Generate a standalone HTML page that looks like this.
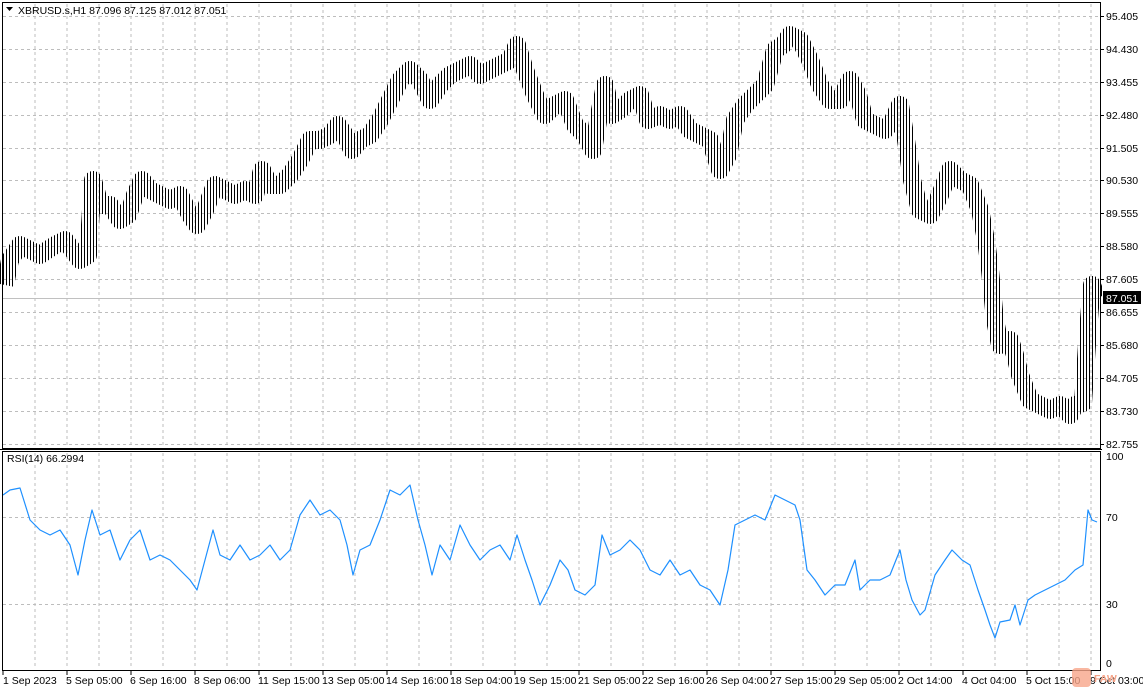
<!DOCTYPE html>
<html><head><meta charset="utf-8"><style>
body{margin:0;background:#fff;width:1143px;height:691px;overflow:hidden;font-family:"Liberation Sans",sans-serif;}
svg text{font-family:"Liberation Sans",sans-serif;font-size:10.5px;fill:#000;}
</style></head><body>
<svg width="1143" height="691" xmlns="http://www.w3.org/2000/svg">
<defs>
<pattern id="bars" x="0" y="0" width="3" height="10" patternUnits="userSpaceOnUse">
<rect x="0" y="0" width="1" height="10" fill="#000"/>
</pattern>
</defs>
<g stroke="#bdbdbd" stroke-dasharray="3,3">
<path d="M35 4V448M67 4V448M99 4V448M131 4V448M163 4V448M195 4V448M227 4V448M259 4V448M291 4V448M323 4V448M355 4V448M387 4V448M419 4V448M451 4V448M483 4V448M515 4V448M547 4V448M579 4V448M611 4V448M643 4V448M675 4V448M707 4V448M739 4V448M771 4V448M803 4V448M835 4V448M867 4V448M899 4V448M931 4V448M963 4V448M995 4V448M1027 4V448M1059 4V448M1091 4V448"/>
<path d="M35 453V669M67 453V669M99 453V669M131 453V669M163 453V669M195 453V669M227 453V669M259 453V669M291 453V669M323 453V669M355 453V669M387 453V669M419 453V669M451 453V669M483 453V669M515 453V669M547 453V669M579 453V669M611 453V669M643 453V669M675 453V669M707 453V669M739 453V669M771 453V669M803 453V669M835 453V669M867 453V669M899 453V669M931 453V669M963 453V669M995 453V669M1027 453V669M1059 453V669M1091 453V669"/>
<path d="M3 16.5H1100M3 49.5H1100M3 82.5H1100M3 115.5H1100M3 148.5H1100M3 180.5H1100M3 213.5H1100M3 246.5H1100M3 279.5H1100M3 312.5H1100M3 345.5H1100M3 378.5H1100M3 411.5H1100M3 444.5H1100"/>
<path d="M3 517.5H1100M3 604.5H1100"/>
</g>
<line x1="3" y1="298.5" x2="1100" y2="298.5" stroke="#c0c0c0"/>
<polyline fill="none" stroke="url(#bars)" stroke-width="18" stroke-linejoin="round" points="5,285 10,260 20,245 30,250 40,255 55,245 65,240 80,260 88,255 93,180 100,205 110,205 120,220 128,215 135,195 142,180 150,190 160,195 170,200 180,195 190,215 197,225 205,210 215,185 225,190 235,195 245,190 255,195 262,170 270,185 280,185 290,175 300,160 310,140 320,140 330,135 338,125 345,135 352,150 360,140 370,135 380,120 390,100 400,80 410,70 420,80 430,100 440,85 450,75 460,70 470,65 480,75 490,70 500,65 510,60 517,45 525,70 535,95 545,115 555,105 565,100 575,125 585,135 593,150 600,110 605,85 612,115 620,110 630,100 640,95 648,120 660,115 670,120 680,115 690,130 700,135 710,140 720,170 728,155 735,120 745,105 755,95 765,85 775,50 783,45 790,35 800,40 810,60 820,85 830,100 840,100 850,80 858,95 865,120 875,125 885,130 893,120 900,105 906,140 912,180 920,210 930,215 940,195 950,170 960,180 970,185 980,210 986,240 990,270 995,320 1000,345 1010,340 1015,355 1020,375 1030,400 1040,405 1050,410 1060,405 1070,415 1075,405 1083,403 1088,330 1092,285 1097,298"/>
<polyline fill="none" stroke="#1e90ff" stroke-width="1.2" stroke-linejoin="round" points="3,495 10,490 20,488 30,520 40,530 50,535 60,530 70,545 78,575 85,540 92,510 100,535 110,530 120,560 130,540 140,530 150,560 160,555 170,560 180,570 190,580 197,590 205,560 213,530 220,555 230,560 240,545 250,560 260,555 270,545 280,560 290,550 300,515 310,500 320,515 330,510 340,520 347,545 353,575 360,550 370,545 380,520 390,490 400,495 410,485 418,520 425,545 432,575 440,545 450,560 460,525 470,545 480,560 490,550 500,545 510,560 517,535 525,560 532,580 540,605 550,585 560,560 568,570 575,590 585,595 595,585 602,535 610,555 620,550 630,540 640,550 650,570 660,575 670,560 680,575 690,570 700,585 710,590 720,605 728,570 735,525 745,520 755,515 765,520 775,495 785,500 795,505 800,520 807,570 815,580 825,595 835,585 845,585 855,560 860,590 870,580 880,580 890,575 900,550 906,580 912,600 920,615 925,610 935,575 945,560 952,550 962,560 970,565 978,590 985,610 990,625 995,638 1000,622 1010,620 1015,605 1020,625 1028,600 1035,595 1045,590 1055,585 1065,580 1075,570 1083,565 1088,510 1092,520 1097,522"/>
<rect x="2.5" y="2.5" width="1098" height="446" fill="none" stroke="#000"/>
<rect x="2.5" y="451.5" width="1098" height="219" fill="none" stroke="#000"/>
<line x1="0" y1="449.5" x2="1102" y2="449.5" stroke="#000"/>
<g>
<text x="1106" y="20">95.405</text><text x="1106" y="53">94.430</text><text x="1106" y="86">93.455</text>
<text x="1106" y="119">92.480</text><text x="1106" y="152">91.505</text><text x="1106" y="184">90.530</text>
<text x="1106" y="217">89.555</text><text x="1106" y="250">88.580</text><text x="1106" y="283">87.605</text>
<text x="1106" y="316">86.655</text><text x="1106" y="349">85.680</text><text x="1106" y="382">84.705</text>
<text x="1106" y="415">83.730</text><text x="1106" y="448">82.755</text>
</g>
<path d="M1101 16.5h3M1101 49.5h3M1101 82.5h3M1101 115.5h3M1101 148.5h3M1101 180.5h3M1101 213.5h3M1101 246.5h3M1101 279.5h3M1101 312.5h3M1101 345.5h3M1101 378.5h3M1101 411.5h3M1101 444.5h3" stroke="#000"/>
<rect x="1103" y="291" width="38" height="13" fill="#000"/>
<text x="1106" y="302" style="fill:#fff">87.051</text>
<text x="1106" y="460">100</text><text x="1106" y="521">70</text><text x="1106" y="608">30</text><text x="1106" y="667">0</text>
<path d="M6 7h7l-3.5 4z" fill="#000"/>
<text x="18" y="14">XBRUSD.s,H1  87.096 87.125 87.012 87.051</text>
<text x="7" y="462">RSI(14) 66.2994</text>
<path d="M3 671v4M67 671v4M131 671v4M195 671v4M259 671v4M323 671v4M387 671v4M451 671v4M515 671v4M579 671v4M643 671v4M707 671v4M771 671v4M835 671v4M899 671v4M963 671v4M1027 671v4M1091 671v4" stroke="#000"/>
<g>
<text x="3" y="684">1 Sep 2023</text><text x="66" y="684">5 Sep 05:00</text><text x="130" y="684">6 Sep 16:00</text>
<text x="194" y="684">8 Sep 06:00</text><text x="258" y="684">11 Sep 15:00</text><text x="322" y="684">13 Sep 05:00</text>
<text x="386" y="684">14 Sep 16:00</text><text x="450" y="684">18 Sep 04:00</text><text x="514" y="684">19 Sep 15:00</text>
<text x="578" y="684">21 Sep 05:00</text><text x="642" y="684">22 Sep 16:00</text><text x="706" y="684">26 Sep 04:00</text>
<text x="770" y="684">27 Sep 15:00</text><text x="834" y="684">29 Sep 05:00</text><text x="898" y="684">2 Oct 14:00</text>
<text x="962" y="684">4 Oct 04:00</text><text x="1026" y="684">5 Oct 15:00</text><text x="1090" y="684">9 Oct 03:00</text>
</g>
<rect x="1072" y="668" width="19" height="19" rx="4" fill="#f7a58a" opacity="0.8"/>
<text x="1094" y="682" style="fill:#f7a58a;font-weight:bold">FAW</text>
</svg>
</body></html>
